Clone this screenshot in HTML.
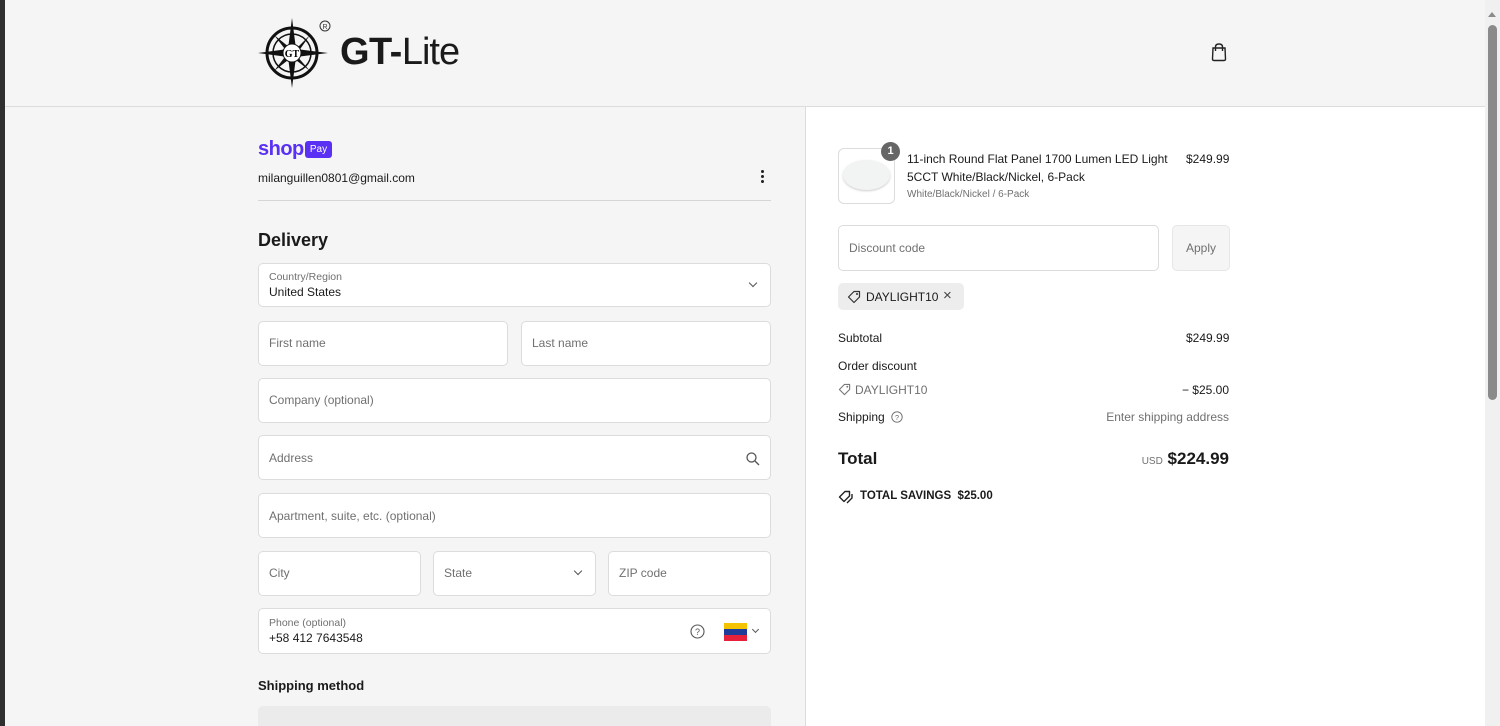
<!DOCTYPE html>
<html><head><meta charset="utf-8"><style>
*{box-sizing:border-box;margin:0;padding:0}
body{width:1500px;height:726px;overflow:hidden;background:#f5f5f5;font-family:"Liberation Sans",sans-serif;color:#1a1a1a;position:relative;font-size:12px}
.a{position:absolute}
.f{position:absolute;background:#fff;border:1px solid #dcdcdc;border-radius:5px;height:45px}
.ph{position:absolute;left:10px;top:14px;color:#707070;font-size:12px}
.lb{position:absolute;left:10px;top:7px;color:#707070;font-size:10.5px}
.vl{position:absolute;left:10px;top:21px;font-size:12px;color:#1a1a1a}
.chev{position:absolute;right:14px;top:16px;width:6px;height:6px;border-right:1.3px solid #555;border-bottom:1.3px solid #555;transform:rotate(45deg)}
</style></head><body>
<div class="a" style="left:0;top:0;width:5px;height:726px;background:#2f2f2f"></div>
<div class="a" style="left:5px;top:106px;width:1480px;height:1px;background:#dcdcdc"></div>
<div class="a" style="left:805px;top:107px;width:680px;height:619px;background:#fff;border-left:1px solid #dcdcdc"></div>
<!-- scrollbar -->
<div class="a" style="left:1485px;top:0;width:15px;height:726px;background:#f0f0f0"></div>
<div class="a" style="left:1488px;top:25px;width:9px;height:375px;background:#8a8a8a;border-radius:5px"></div>
<div class="a" style="left:1488px;top:12px;width:0;height:0;border-left:4.5px solid transparent;border-right:4.5px solid transparent;border-bottom:5px solid #8a8a8a"></div>

<!-- logo -->
<svg class="a" style="left:256px;top:16px" width="80" height="74" viewBox="0 0 80 74">
<circle cx="36" cy="37" r="25" fill="none" stroke="#111" stroke-width="3"/>
<circle cx="36" cy="37" r="19" fill="none" stroke="#111" stroke-width="1.5"/>
<path d="M36 2 L40 33 L72 37 L40 41 L36 72 L32 41 L2 37 L32 33Z" fill="#111"/>
<path d="M18 19 L38 35 L54 19 L40 39 L54 55 L36 41 L18 55 L32 37Z" fill="#111"/>
<circle cx="36" cy="37" r="9" fill="#fff" stroke="#111"/>
<text x="36" y="41" font-size="10" font-weight="bold" font-family="Liberation Serif" text-anchor="middle">GT</text>
<circle cx="69" cy="10" r="5" fill="none" stroke="#333"/><text x="69" y="13" font-size="7" text-anchor="middle" fill="#333">R</text>
</svg>
<div class="a" style="left:340px;top:30px;font-size:38px;font-weight:bold;letter-spacing:-0.5px;line-height:44px">GT-<span style="font-weight:normal;letter-spacing:-1px">Lite</span></div>
<svg class="a" style="left:1210px;top:42px" width="18" height="20" viewBox="0 0 18 20"><path d="M3 6 H15 L15.5 17 Q15.5 18.5 14 18.5 H4 Q2.5 18.5 2.5 17Z" fill="none" stroke="#222" stroke-width="1.4"/><path d="M5.5 9 V5 Q5.5 2 9 2 Q12.5 2 12.5 5 V9" fill="none" stroke="#222" stroke-width="1.4"/></svg>

<!-- left -->
<div class="a" style="left:258px;top:138px;font-size:20px;font-weight:bold;color:#5a31f4;letter-spacing:-0.5px;line-height:22px">shop</div>
<div class="a" style="left:305px;top:141px;width:27px;height:17px;background:#5a31f4;border-radius:3px;color:#fff;font-size:10px;text-align:center;line-height:17px">Pay</div>
<div class="a" style="left:258px;top:171px;font-size:12px">milanguillen0801@gmail.com</div>
<div class="a" style="left:761px;top:170px;width:3px;height:3px;background:#222;border-radius:50%;box-shadow:0 5px #222,0 10px #222"></div>
<div class="a" style="left:258px;top:200px;width:513px;height:1px;background:#d6d6d6"></div>
<div class="a" style="left:258px;top:230px;font-size:18px;font-weight:bold">Delivery</div>

<div class="f" style="left:258px;top:263px;width:513px;height:44px"><div class="lb">Country/Region</div><div class="vl">United States</div><div class="chev" style="top:16px"></div></div>
<div class="f" style="left:258px;top:321px;width:250px"><div class="ph">First name</div></div>
<div class="f" style="left:521px;top:321px;width:250px"><div class="ph">Last name</div></div>
<div class="f" style="left:258px;top:378px;width:513px"><div class="ph">Company (optional)</div></div>
<div class="f" style="left:258px;top:435px;width:513px"><div class="ph" style="top:15px">Address</div>
<svg class="a" style="right:10px;top:16px" width="14" height="14" viewBox="0 0 14 14"><circle cx="5.5" cy="5.5" r="4.5" fill="none" stroke="#555" stroke-width="1.3"/><path d="M9 9 L13 13" stroke="#555" stroke-width="1.3"/></svg></div>
<div class="f" style="left:258px;top:493px;width:513px"><div class="ph" style="top:15px">Apartment, suite, etc. (optional)</div></div>
<div class="f" style="left:258px;top:551px;width:163px"><div class="ph">City</div></div>
<div class="f" style="left:433px;top:551px;width:163px"><div class="ph">State</div><div class="chev"></div></div>
<div class="f" style="left:608px;top:551px;width:163px"><div class="ph">ZIP code</div></div>
<div class="f" style="left:258px;top:608px;width:513px;height:46px"><div class="lb" style="top:8px">Phone (optional)</div><div class="vl" style="top:22px">+58 412 7643548</div>
<svg class="a" style="left:431px;top:15px" width="15" height="15" viewBox="0 0 15 15"><circle cx="7.5" cy="7.5" r="6.5" fill="none" stroke="#555" stroke-width="1.1"/><text x="7.5" y="11" font-size="9" text-anchor="middle" fill="#555">?</text></svg>
<div class="a" style="left:465px;top:14px;width:23px;height:6px;background:#f4c300"></div>
<div class="a" style="left:465px;top:20px;width:23px;height:6px;background:#1f3c99"></div>
<div class="a" style="left:465px;top:26px;width:23px;height:6px;background:#e8213b"></div>
<div class="chev" style="right:12px;top:18px;width:5px;height:5px"></div></div>
<div class="a" style="left:258px;top:678px;font-size:13px;font-weight:bold">Shipping method</div>
<div class="a" style="left:258px;top:706px;width:513px;height:20px;background:#ebebeb;border-radius:5px 5px 0 0"></div>

<!-- right -->
<div class="a" style="left:838px;top:148px;width:57px;height:56px;border:1px solid #dcdcdc;border-radius:6px;background:#fff"></div>
<div class="a" style="left:843px;top:160px;width:47px;height:30px;border-radius:50%;background:#f2f4f4;box-shadow:0 1px 2px #ccc"></div>
<div class="a" style="left:881px;top:142px;width:19px;height:19px;border-radius:50%;background:#666;color:#fff;font-size:11px;font-weight:bold;text-align:center;line-height:19px">1</div>
<div class="a" style="left:907px;top:150px;font-size:12px;line-height:18px;width:270px">11-inch Round Flat Panel 1700 Lumen LED Light 5CCT White/Black/Nickel, 6-Pack</div>
<div class="a" style="left:907px;top:189px;font-size:10px;color:#707070">White/Black/Nickel / 6-Pack</div>
<div class="a" style="left:1186px;top:152px;font-size:12px">$249.99</div>
<div class="f" style="left:838px;top:225px;width:321px;height:46px"><div class="ph" style="top:15px">Discount code</div></div>
<div class="a" style="left:1172px;top:225px;width:58px;height:46px;background:#f5f5f5;border:1px solid #e6e6e6;border-radius:5px;color:#707070;font-size:12px;text-align:center;line-height:44px">Apply</div>
<div class="a" style="left:838px;top:283px;width:126px;height:27px;background:#ededed;border-radius:5px"></div>
<svg class="a" style="left:847px;top:290px" width="14" height="14" viewBox="0 0 14 14"><path d="M1.5 7 L7 1.5 H12.5 V7 L7 12.5Z" fill="none" stroke="#333" stroke-width="1.2" stroke-linejoin="round"/><circle cx="10" cy="4" r="1" fill="#333"/></svg>
<div class="a" style="left:866px;top:290px;font-size:12px">DAYLIGHT10</div>
<div class="a" style="left:943px;top:287px;font-size:15px;color:#444">×</div>

<div class="a" style="left:838px;top:331px;font-size:12px">Subtotal</div>
<div class="a" style="left:1186px;top:331px;font-size:12px">$249.99</div>
<div class="a" style="left:838px;top:359px;font-size:12px">Order discount</div>
<svg class="a" style="left:838px;top:383px" width="13" height="13" viewBox="0 0 14 14"><path d="M1.5 7 L7 1.5 H12.5 V7 L7 12.5Z" fill="none" stroke="#777" stroke-width="1.2" stroke-linejoin="round"/><circle cx="10" cy="4" r="1" fill="#777"/></svg>
<div class="a" style="left:855px;top:383px;font-size:12px;color:#707070">DAYLIGHT10</div>
<div class="a" style="right:271px;top:383px;font-size:12px">− $25.00</div>
<div class="a" style="left:838px;top:410px;font-size:12px">Shipping</div>
<svg class="a" style="left:891px;top:411px" width="12" height="12" viewBox="0 0 15 15"><circle cx="7.5" cy="7.5" r="6.5" fill="none" stroke="#666" stroke-width="1.1"/><text x="7.5" y="11" font-size="9" text-anchor="middle" fill="#666">?</text></svg>
<div class="a" style="right:271px;top:410px;font-size:12px;color:#707070">Enter shipping address</div>
<div class="a" style="left:838px;top:449px;font-size:17px;font-weight:bold">Total</div>
<div class="a" style="right:271px;top:449px;font-size:17px;font-weight:bold"><span style="font-size:10px;font-weight:normal;color:#707070">USD</span> $224.99</div>
<svg class="a" style="left:838px;top:490px" width="16" height="14" viewBox="0 0 16 14"><path d="M1.5 7 L7 1.5 H11.5 V6 L6 11.5Z" fill="none" stroke="#222" stroke-width="1.4" stroke-linejoin="round"/><path d="M14 4 V8 L9 13" fill="none" stroke="#222" stroke-width="1.4"/></svg>
<div class="a" style="left:860px;top:490px;font-size:11.5px;font-weight:bold">TOTAL SAVINGS &nbsp;$25.00</div>
</body></html>
